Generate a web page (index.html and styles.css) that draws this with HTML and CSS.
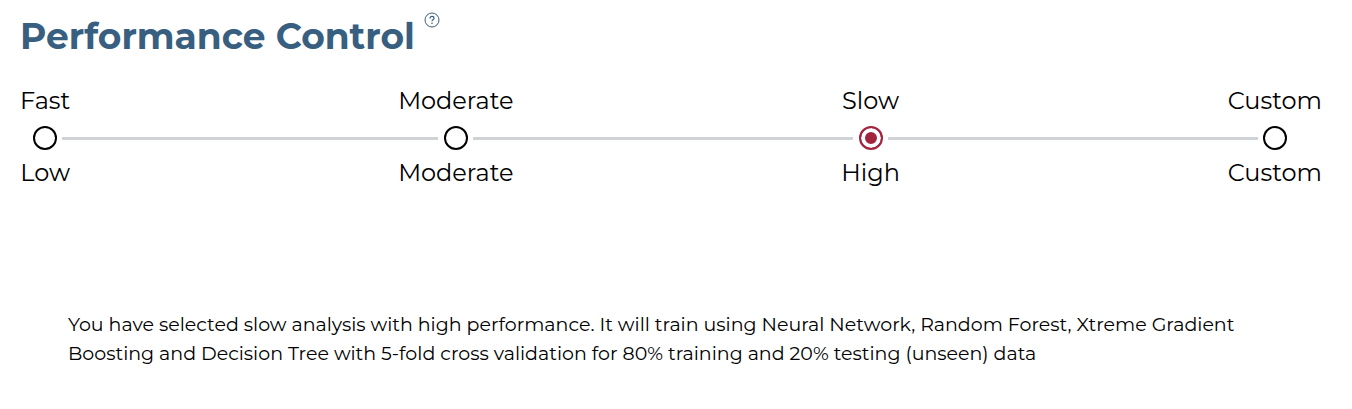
FILE: index.html
```html
<!DOCTYPE html>
<html lang="en">
<head>
<meta charset="utf-8">
<meta name="viewport" content="width=device-width, initial-scale=1">
<title>Performance Control</title>
<link rel="stylesheet" href="styles.css">
</head>
<body>
<main class="panel">
  <header class="header">
    <h1 class="title">Performance Control</h1>
    <button class="help" type="button" aria-label="Help">
      <svg viewBox="0 0 16 16" width="16" height="16" fill="none" stroke="currentColor"><circle cx="8" cy="8" r="7"/><path d="M6 6.4C6 5.1 6.8 4.4 8 4.4s2 .7 2 1.8c0 1.5-2 1.5-2 3.1" stroke-width="1.2"/><circle cx="8" cy="11.3" r=".8" fill="currentColor" stroke="none"/></svg>
    </button>
  </header>
  <div class="scale" role="radiogroup" aria-label="Performance level">
    <label class="stop"><span>Fast</span><input class="radio" type="radio" name="level"><span>Low</span></label>
    <span class="line line-first"></span>
    <label class="stop"><span>Moderate</span><input class="radio" type="radio" name="level"><span>Moderate</span></label>
    <span class="line line-middle"></span>
    <label class="stop"><span>Slow</span><input class="radio" type="radio" name="level" checked><span>High</span></label>
    <span class="line line-last"></span>
    <label class="stop"><span>Custom</span><input class="radio" type="radio" name="level"><span>Custom</span></label>
  </div>
  <p class="summary">You have selected slow analysis with high performance. It will train using Neural Network, Random Forest, Xtreme Gradient Boosting and Decision Tree with 5-fold cross validation for 80% training and 20% testing (unseen) data</p>
</main>
</body>
</html>
```
FILE: styles.css
```css
* { box-sizing: border-box; }
body { margin: 0; background: #fff; color: #000; font-family: Montserrat, Inter, "Open Sans", sans-serif; }
.panel { padding: 12px 30px 24px 20px; }
.header { display: flex; align-items: flex-start; gap: 9px; }
.title { margin: 0; color: #385f7f; font-size: 36px; line-height: 48px; font-weight: 700; }
.help { display: flex; padding: 0; border: 0; background: none; color: #385f7f; }
.scale { display: grid; grid-template-columns: auto 1fr auto 1fr auto 1fr auto; align-items: center; margin-top: 26px; }
.stop { display: flex; flex-direction: column; align-items: center; gap: 9px; padding-top: 1px; font-size: 24px; line-height: 28px; }
.radio { appearance: none; width: 24px; height: 24px; margin: 2px 0 0; border: 2px solid #000; border-radius: 50%; }
.radio:checked { border-color: #a3243f; background: #a3243f; box-shadow: inset 0 0 0 4px #fff; }
.line { height: 3px; margin-top: 3px; background: #cfd3d8; }
.line-first { margin-right: -40px; margin-left: -8px; }
.line-middle { margin-right: -12px; margin-left: -40px; }
.line-last { margin-right: -30px; margin-left: -12px; }
.summary { margin: 123px 48px 0 48px; font-size: 19px; line-height: 29px; }
```
